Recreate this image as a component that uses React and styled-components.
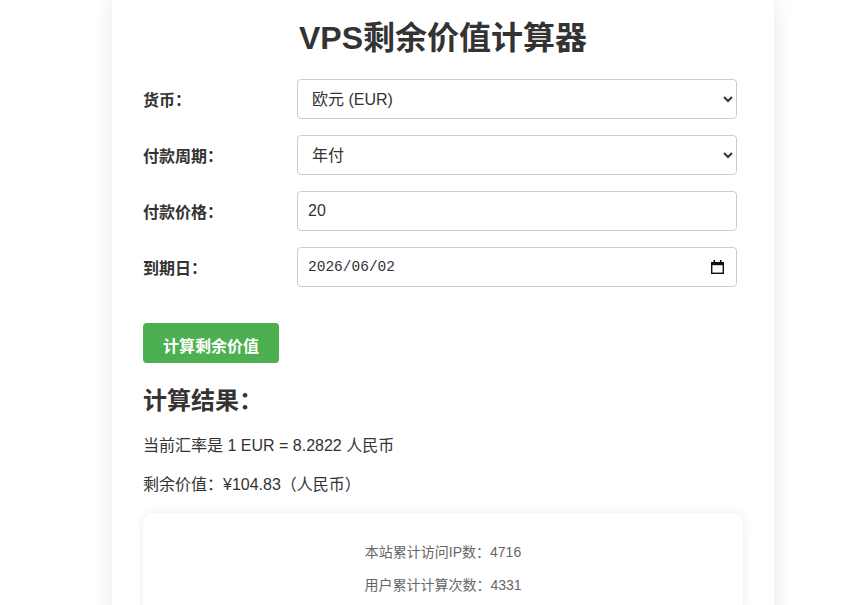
import React, { useState } from 'react';
import styled, { createGlobalStyle } from 'styled-components';

const GlobalStyle = createGlobalStyle`
  html, body {
    margin: 0;
    padding: 0;
    background: #ffffff;
  }
  body {
    font-family: 'Liberation Sans', 'Noto Sans CJK SC', sans-serif;
    color: #333;
    overflow: hidden;
  }
`;

const Page = styled.div`
  width: 867px;
  height: 605px;
  overflow: hidden;
  padding-left: 112px;
  box-sizing: border-box;
`;

const Card = styled.div`
  width: 662px;
  min-height: 640px;
  box-sizing: border-box;
  background: #fff;
  padding: 19px 31px 30px;
  box-shadow: 0 0 20px rgba(0, 0, 0, 0.1);
`;

const Title = styled.h1`
  margin: 0 0 22px;
  font-size: 32px;
  line-height: 1.2;
  font-weight: bold;
  text-align: center;
  color: #333;
`;

const Form = styled.div`
  display: flex;
  flex-direction: column;
  gap: 16px;
`;

const Row = styled.div`
  display: flex;
  align-items: center;
  width: 600px;
`;

const Label = styled.label`
  flex: 0 0 154px;
  font-size: 16px;
  font-weight: bold;
  color: #333;
`;

const fieldCss = `
  width: 440px;
  height: 40px;
  box-sizing: border-box;
  border: 1px solid #ccc;
  border-radius: 4px;
  background: #fff;
  color: #333;
  font-size: 16px;
  font-family: 'Liberation Sans', 'Noto Sans CJK SC', sans-serif;
  padding: 0 10px;
  outline: none;
`;

const Select = styled.select`
  ${fieldCss}
  padding: 0 8px 0 10px;
`;

const Input = styled.input`
  ${fieldCss}
  font-family: ${p => (p.$mono ? "'Liberation Mono', monospace" : "'Liberation Sans', 'Noto Sans CJK SC', sans-serif")};
  font-size: ${p => (p.$mono ? '14.5px' : '16px')};
`;

const DateWrap = styled.div`
  position: relative;
  width: 440px;
`;

const CalIcon = styled.svg`
  position: absolute;
  right: 13px;
  top: 13px;
  pointer-events: none;
`;

const Button = styled.button`
  margin-top: 20px;
  align-self: flex-start;
  background: #4caf50;
  color: #fff;
  border: none;
  border-radius: 4px;
  padding: 10px 20px;
  height: 40px;
  font-size: 16px;
  font-weight: bold;
  font-family: 'Liberation Sans', 'Noto Sans CJK SC', sans-serif;
  cursor: pointer;
`;

const ResultTitle = styled.h2`
  margin: 24px 0 19px;
  font-size: 24px;
  line-height: 1.2;
  font-weight: bold;
  color: #333;
`;

const ResultLine = styled.p`
  margin: 0 0 18px;
  font-size: 16px;
  line-height: 21px;
  color: #333;
`;

const Stats = styled.div`
  margin-top: 18px;
  width: 600px;
  box-sizing: border-box;
  padding: 30px 20px 24px;
  border-radius: 10px;
  background: #fff;
  box-shadow: 0 0 12px rgba(0, 0, 0, 0.08);
  display: flex;
  flex-direction: column;
  align-items: center;
  gap: 14px;
`;

const StatLine = styled.p`
  margin: 0;
  font-size: 14px;
  line-height: 19px;
  color: #666;
`;

export default function App() {
  const [currency, setCurrency] = useState('EUR');
  const [cycle, setCycle] = useState('year');
  const [price, setPrice] = useState('20');
  const [date, setDate] = useState('2026/06/02');

  return (
    <>
      <GlobalStyle />
      <Page>
        <Card>
          <Title>VPS剩余价值计算器</Title>
          <Form>
            <Row>
              <Label>货币：</Label>
              <Select value={currency} onChange={e => setCurrency(e.target.value)}>
                <option value="CNY">人民币 (CNY)</option>
                <option value="USD">美元 (USD)</option>
                <option value="EUR">欧元 (EUR)</option>
              </Select>
            </Row>
            <Row>
              <Label>付款周期：</Label>
              <Select value={cycle} onChange={e => setCycle(e.target.value)}>
                <option value="month">月付</option>
                <option value="quarter">季付</option>
                <option value="year">年付</option>
              </Select>
            </Row>
            <Row>
              <Label>付款价格：</Label>
              <Input value={price} onChange={e => setPrice(e.target.value)} />
            </Row>
            <Row>
              <Label>到期日：</Label>
              <DateWrap>
                <Input $mono value={date} onChange={e => setDate(e.target.value)} />
                <CalIcon width="13" height="14" viewBox="0 0 13 14">
                  <rect x="2.5" y="0" width="1.6" height="3" fill="#111" />
                  <rect x="8.9" y="0" width="1.6" height="3" fill="#111" />
                  <rect x="0" y="2" width="13" height="3.2" fill="#111" />
                  <rect x="0.7" y="2.7" width="11.6" height="10.6" fill="none" stroke="#111" strokeWidth="1.4" />
                </CalIcon>
              </DateWrap>
            </Row>
            <Button>计算剩余价值</Button>
          </Form>
          <ResultTitle>计算结果：</ResultTitle>
          <ResultLine>当前汇率是 1 EUR = 8.2822 人民币</ResultLine>
          <ResultLine>剩余价值：¥104.83（人民币）</ResultLine>
          <Stats>
            <StatLine>本站累计访问IP数：4716</StatLine>
            <StatLine>用户累计计算次数：4331</StatLine>
          </Stats>
        </Card>
      </Page>
    </>
  );
}
